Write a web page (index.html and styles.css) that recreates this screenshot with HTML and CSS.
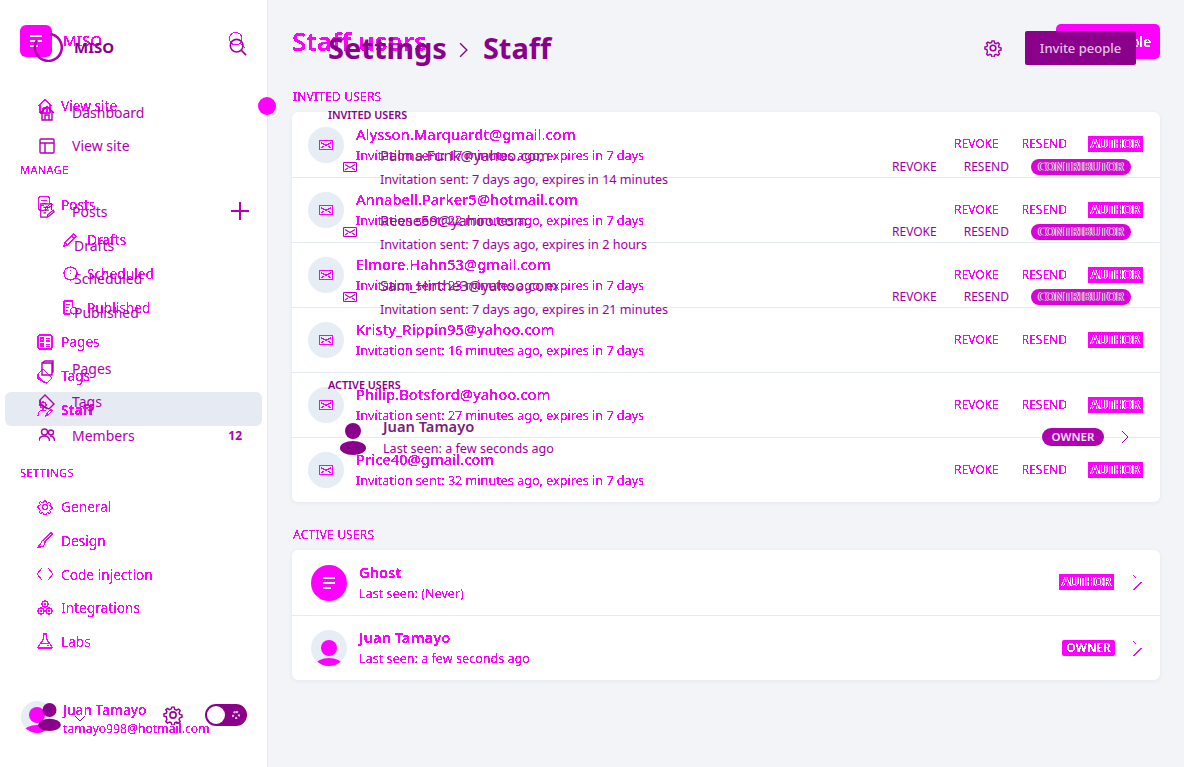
FILE: index.html
```html
<!DOCTYPE html>
<html lang="en">
<head>
<meta charset="utf-8">
<title>Staff</title>
<link rel="stylesheet" href="styles.css">
</head>
<body>
<svg class="defs" width="0" height="0" aria-hidden="true">
  <defs>
    <filter id="crisp" x="-5%" y="-5%" width="110%" height="110%" color-interpolation-filters="sRGB">
      <feComponentTransfer><feFuncA type="discrete" tableValues="0 0 1 1 1"/></feComponentTransfer>
    </filter>
    <symbol id="i-home" viewBox="0 0 16 16"><path d="M1 8 8 1.500 15 8M3 6.500V15h10V6.500M6 15v-5h4v5"/></symbol>
    <symbol id="i-posts" viewBox="0 0 16 18"><path d="M13 8V1H1v15h6M4 5h6M4 8h6M4 11h3M8 16l1-3 6-5 1 2-6 5z"/></symbol>
    <symbol id="i-pencil" viewBox="0 0 16 16"><path d="M1 15l1-4L11 2l3 3-9 9zM9 4l3 3M2 11l3 3"/></symbol>
    <symbol id="i-clock" viewBox="0 0 16 16"><circle cx="8" cy="8" r="7"/><path d="M8 7.500v1M8 4v1"/></symbol>
    <symbol id="i-pub" viewBox="0 0 16 16"><path d="M8 15H1V1h9v6M3.500 5h4M3.500 8h3M3.500 11h2"/><circle cx="11.500" cy="11.500" r="3.500"/></symbol>
    <symbol id="i-pages" viewBox="0 0 16 16"><rect x="1" y="1" width="14" height="14" rx="1"/><path d="M3.500 4h3v3h-3zM3.500 10h3v2h-3zM9 4.500h4M9 7h4M9 10.500h4M9 12.500h4"/></symbol>
    <symbol id="i-tag" viewBox="0 0 16 16"><path d="M1 6l5-5 9 9-5 5-9-4z"/><path d="M1 6v3l7 6"/></symbol>
    <symbol id="i-staff" viewBox="0 0 16 16"><circle cx="6" cy="4" r="3"/><path d="M1 15c0-4 2-6 5-6 1 0 2 .3 3 1M9 15l1-3 4-4 1 2-4 4z"/></symbol>
    <symbol id="i-gear" viewBox="0 0 16 16"><circle cx="8" cy="8" r="2.500"/><path d="M7 1h2l.5 2 1.500.7 2-1 1.400 1.500-1 1.800.6 1.500 2 .5v2l-2 .5-.6 1.500 1 1.800-1.400 1.500-2-1-1.500.7-.5 2H7l-.5-2-1.500-.7-2 1-1.400-1.500 1-1.800L2 9.500 0 9V7l2-.5.6-1.500-1-1.800L3 2.200l2 1 1.500-.7z" transform="translate(.8 .8) scale(.9)"/></symbol>
    <symbol id="i-brush" viewBox="0 0 16 16"><path d="M15 1 14 .5 6 8l2 2 7.500-8zM6 8c-1 .5-1.500 1-2 3l-3 4h2.500C6 15 8 13 8 10"/></symbol>
    <symbol id="i-code" viewBox="0 0 16 16"><path d="M5 2 0 8l5 6M11 2l5 6-5 6"/></symbol>
    <symbol id="i-int" viewBox="0 0 16 16"><circle cx="8" cy="4" r="3"/><circle cx="4" cy="11" r="3"/><circle cx="12" cy="11" r="3"/><path d="M8 3v2M3 11h2M11 11h2"/></symbol>
    <symbol id="i-labs" viewBox="0 0 16 16"><path d="M5.500 1h5M6.500 1v5L1 14v1h14v-1L9.500 6V1M3.500 10.500h9M10 12.500h2M11 11.500v2"/></symbol>
    <symbol id="i-mail" viewBox="0 0 14 10"><rect x=".5" y=".5" width="13" height="9" rx="1"/><path d="M2 2.500 7 5.500l5-3M2 8l3-2M12 8 9 6"/></symbol>
    <symbol id="i-search" viewBox="0 0 20 20"><circle cx="8.500" cy="8.500" r="7"/><path d="M13.500 13.500 19 19"/></symbol>
    <symbol id="i-chev" viewBox="0 0 8 14"><path d="M1 1l6 6-6 6"/></symbol>
    <symbol id="i-chev-a" viewBox="0 0 9 15"><path d="M.5 .5l2 2M.5 14.500l8-7"/></symbol>
    <symbol id="i-lines" viewBox="0 0 16 16"><path d="M2 3h12M2 8h12M2 13h8"/></symbol>
    <symbol id="i-person" viewBox="0 0 26 32"><circle cx="13" cy="8" r="8"/><ellipse cx="13" cy="25" rx="13" ry="7"/></symbol>
  </defs>
</svg>

<div class="stage">
  <div class="layer-a">
    <aside class="a-side">
      <div class="a-brand">
        <span class="a-logo"><svg class="lines"><use href="#i-lines"/></svg></span>
        <span class="a-brand-name t">MISO</span>
        <svg class="a-search ic"><use href="#i-search"/></svg>
      </div>
      <span class="a-dot"></span>
      <nav class="a-nav">
        <a class="a-item"><svg class="ic"><use href="#i-home"/></svg><span class="t">View site</span></a>
        <div class="a-label t">MANAGE</div>
        <a class="a-item a-posts"><svg class="ic"><use href="#i-posts"/></svg><span class="t">Posts</span></a>
        <a class="a-item a-sub"><svg class="ic"><use href="#i-pencil"/></svg><span class="t">Drafts</span></a>
        <a class="a-item a-sub"><svg class="ic"><use href="#i-clock"/></svg><span class="t">Scheduled</span></a>
        <a class="a-item a-sub"><svg class="ic"><use href="#i-pub"/></svg><span class="t">Published</span></a>
        <a class="a-item a-pages"><svg class="ic"><use href="#i-pages"/></svg><span class="t">Pages</span></a>
        <a class="a-item"><svg class="ic"><use href="#i-tag"/></svg><span class="t">Tags</span></a>
        <a class="a-item is-active"><svg class="ic"><use href="#i-staff"/></svg><span class="t">Staff</span></a>
        <div class="a-label a-label-gap t">SETTINGS</div>
        <a class="a-item"><svg class="ic"><use href="#i-gear"/></svg><span class="t">General</span></a>
        <a class="a-item"><svg class="ic"><use href="#i-brush"/></svg><span class="t">Design</span></a>
        <a class="a-item"><svg class="ic"><use href="#i-code"/></svg><span class="t">Code injection</span></a>
        <a class="a-item"><svg class="ic"><use href="#i-int"/></svg><span class="t">Integrations</span></a>
        <a class="a-item"><svg class="ic"><use href="#i-labs"/></svg><span class="t">Labs</span></a>
      </nav>
      <div class="a-foot">
        <span class="a-foot-av"><svg class="person"><use href="#i-person"/></svg></span>
        <div class="a-foot-text t"><div class="a-foot-name">Juan Tamayo</div><div>tamayo998@hotmail.com</div></div>
      </div>
    </aside>
    <main class="a-main">
      <header class="a-head">
        <h1 class="a-title t">Staff users</h1>
        <button class="a-btn"><span class="t">Invite people</span></button>
      </header>
      <div class="a-cap a-cap-first t">INVITED USERS</div>
      <section class="a-card">
        <div class="a-row"><span class="a-av"><svg class="mail ic"><use href="#i-mail"/></svg></span><div class="a-body t"><div class="a-mail">Alysson.Marquardt@gmail.com</div><div class="a-sub-t">Invitation sent: 17 minutes ago, expires in 7 days</div></div><span class="a-act t">REVOKE</span><span class="a-act a-act2 t">RESEND</span><span class="a-tag"><span class="t">AUTHOR</span></span></div>
        <div class="a-row"><span class="a-av"><svg class="mail ic"><use href="#i-mail"/></svg></span><div class="a-body t"><div class="a-mail">Annabell.Parker5@hotmail.com</div><div class="a-sub-t">Invitation sent: 22 minutes ago, expires in 7 days</div></div><span class="a-act t">REVOKE</span><span class="a-act a-act2 t">RESEND</span><span class="a-tag"><span class="t">AUTHOR</span></span></div>
        <div class="a-row"><span class="a-av"><svg class="mail ic"><use href="#i-mail"/></svg></span><div class="a-body t"><div class="a-mail">Elmore.Hahn53@gmail.com</div><div class="a-sub-t">Invitation sent: 23 minutes ago, expires in 7 days</div></div><span class="a-act t">REVOKE</span><span class="a-act a-act2 t">RESEND</span><span class="a-tag"><span class="t">AUTHOR</span></span></div>
        <div class="a-row"><span class="a-av"><svg class="mail ic"><use href="#i-mail"/></svg></span><div class="a-body t"><div class="a-mail">Kristy_Rippin95@yahoo.com</div><div class="a-sub-t">Invitation sent: 16 minutes ago, expires in 7 days</div></div><span class="a-act t">REVOKE</span><span class="a-act a-act2 t">RESEND</span><span class="a-tag"><span class="t">AUTHOR</span></span></div>
        <div class="a-row"><span class="a-av"><svg class="mail ic"><use href="#i-mail"/></svg></span><div class="a-body t"><div class="a-mail">Philip.Botsford@yahoo.com</div><div class="a-sub-t">Invitation sent: 27 minutes ago, expires in 7 days</div></div><span class="a-act t">REVOKE</span><span class="a-act a-act2 t">RESEND</span><span class="a-tag"><span class="t">AUTHOR</span></span></div>
        <div class="a-row"><span class="a-av"><svg class="mail ic"><use href="#i-mail"/></svg></span><div class="a-body t"><div class="a-mail">Price40@gmail.com</div><div class="a-sub-t">Invitation sent: 32 minutes ago, expires in 7 days</div></div><span class="a-act t">REVOKE</span><span class="a-act a-act2 t">RESEND</span><span class="a-tag"><span class="t">AUTHOR</span></span></div>
      </section>
      <div class="a-cap a-cap-second t">ACTIVE USERS</div>
      <section class="a-card">
        <div class="a-row a-user"><span class="a-av a-av-ghost"><svg class="lines"><use href="#i-lines"/></svg></span><div class="a-body t"><div class="a-mail">Ghost</div><div class="a-sub-t">Last seen: (Never)</div></div><span class="a-tag"><span class="t">AUTHOR</span></span><svg class="a-chev ic"><use href="#i-chev-a"/></svg></div>
        <div class="a-row a-user"><span class="a-av"><svg class="person"><use href="#i-person"/></svg></span><div class="a-body t"><div class="a-mail">Juan Tamayo</div><div class="a-sub-t">Last seen: a few seconds ago</div></div><span class="a-tag a-tag-owner"><span class="t">OWNER</span></span><svg class="a-chev ic"><use href="#i-chev-a"/></svg></div>
      </section>
    </main>
  </div>

  <div class="layer-b">
    <aside class="b-side">
      <div class="b-brand">
        <svg class="b-ring" viewBox="0 0 30 30"><path d="M17 2A13.500 13.500 0 1 1 4 8"/></svg>
        <span class="b-brand-name">MISO</span>
        <svg class="b-search bi"><use href="#i-search"/></svg>
      </div>
      <nav class="b-nav">
        <a class="b-item"><svg class="bi"><use href="#i-home"/></svg><span>Dashboard</span></a>
        <a class="b-item"><svg class="bi"><rect x="1" y="1" width="14" height="14" rx="1"/><path d="M1 5h14M6 5v10"/></svg><span>View site</span></a>
        <a class="b-item b-gap"><svg class="bi"><use href="#i-posts"/></svg><span>Posts</span><svg class="b-plus bi" viewBox="0 0 18 18"><path d="M9 0v18M0 9h18"/></svg></a>
        <a class="b-item b-sub"><span>Drafts</span></a>
        <a class="b-item b-sub"><span>Scheduled</span></a>
        <a class="b-item b-sub"><span>Published</span></a>
        <a class="b-item b-gap2"><svg class="bi"><path d="M3 3h10v12H3zM3 3l3-2h8v11l-1 1"/></svg><span>Pages</span></a>
        <a class="b-item"><svg class="bi"><use href="#i-tag"/></svg><span>Tags</span></a>
        <a class="b-item"><svg class="bi"><circle cx="5.500" cy="5" r="3"/><circle cx="12" cy="5.500" r="2.500"/><path d="M0 14c0-3 2-5 5.500-5s5 2 5 5M11 9c3 0 4.500 2 4.500 5"/></svg><span>Members</span><b class="b-count">12</b></a>
      </nav>
      <div class="b-foot">
        <svg class="person b-person"><use href="#i-person"/></svg>
        <svg class="b-caret" viewBox="0 0 10 6"><path d="M0 0l5 5 5-5"/></svg>
        <svg class="b-gear bi"><use href="#i-gear"/></svg>
        <span class="b-toggle"><span class="b-knob"></span><span class="b-sun"></span></span>
      </div>
    </aside>
    <main class="b-main">
      <header class="b-head">
        <h1 class="b-title">Settings<svg class="b-sep" viewBox="0 0 8 14"><path d="M1 1l6 6-6 6"/></svg>Staff</h1>
        <svg class="b-head-gear bi"><use href="#i-gear"/></svg>
        <button class="b-btn">Invite people</button>
      </header>
      <div class="b-cap">INVITED USERS</div>
      <div class="b-row"><svg class="b-mail bi"><use href="#i-mail"/></svg><div class="b-body"><div class="b-mailt">Palma.Funk@yahoo.com</div><div class="b-subt">Invitation sent: 7 days ago, expires in 14 minutes</div></div><span class="b-act">REVOKE</span><span class="b-act b-act2">RESEND</span><span class="b-tag">CONTRIBUTOR</span></div>
      <div class="b-row"><svg class="b-mail bi"><use href="#i-mail"/></svg><div class="b-body"><div class="b-mailt">Reese59@yahoo.com</div><div class="b-subt">Invitation sent: 7 days ago, expires in 2 hours</div></div><span class="b-act">REVOKE</span><span class="b-act b-act2">RESEND</span><span class="b-tag">CONTRIBUTOR</span></div>
      <div class="b-row"><svg class="b-mail bi"><use href="#i-mail"/></svg><div class="b-body"><div class="b-mailt">Sam_Hirthe3@yahoo.com</div><div class="b-subt">Invitation sent: 7 days ago, expires in 21 minutes</div></div><span class="b-act">REVOKE</span><span class="b-act b-act2">RESEND</span><span class="b-tag">CONTRIBUTOR</span></div>
      <div class="b-cap b-cap2">ACTIVE USERS</div>
      <div class="b-row b-owner"><svg class="person b-row-person"><use href="#i-person"/></svg><div class="b-body"><div class="b-mailt b-name">Juan Tamayo</div><div class="b-subt">Last seen: a few seconds ago</div></div><span class="b-pill">OWNER</span><svg class="b-chev" viewBox="0 0 8 14"><path d="M1 1l6 6-6 6"/></svg></div>
    </main>
  </div>
</div>
</body>
</html>
```
FILE: styles.css
```css
* { box-sizing: border-box; }
html, body { margin: 0; height: 100%; }
body { font-family: "Noto Sans", sans-serif; overflow: hidden; background: #f2f4f8; }
.defs { position: absolute; }
.stage { position: relative; width: 1184px; height: 767px; overflow: hidden; }

/* Crisp magenta layer */
.t, .ic { filter: url(#crisp); }
.ic { fill: none; stroke: #f0f; stroke-width: 1.1; }
.layer-a { display: flex; height: 100%; color: #f0f; }
.a-side { width: 268px; background: #fff; border-right: 1px solid #e8ebf2; display: flex; flex-direction: column; position: relative; }
.a-brand { display: flex; align-items: center; height: 32px; margin: 25px 0 0 20px; }
.a-logo { width: 32px; height: 32px; background: #f0f; border-radius: 6px; display: flex; align-items: center; justify-content: center; }
.lines { width: 16px; height: 16px; fill: none; stroke: #fff; stroke-width: 2; }
.a-brand-name { margin: -2px 0 0 11px; font-size: 15px; font-weight: 500; }
.a-search { width: 18px; height: 18px; margin: -2px 21px 0 auto; }
.a-dot { position: absolute; left: 258px; top: 97px; width: 18px; height: 18px; border-radius: 50%; background: #f0f; }
.a-nav { margin: 32px 5px 0; display: flex; flex-direction: column; }
.a-item { height: 33.7px; display: flex; align-items: center; padding-left: 32px; font-size: 13.7px; border-radius: 6px; flex: none; }
.a-item svg { width: 16px; height: 16px; margin-right: 8px; flex: none; }
.a-posts { margin-top: 1px; }
.a-sub { padding-left: 58px; height: 34px; }
.a-posts + .a-sub { margin-top: 1px; }
.a-pages { margin-top: 1px; }
.a-sub svg { width: 15px; height: 15px; margin-right: 9px; }
.is-active { background: #e6ebf3; font-weight: 700; }
.a-label { height: 33.7px; line-height: 33.7px; padding-left: 15px; font-size: 11px; letter-spacing: .4px; margin-top: 30px; flex: none; }
.a-foot { margin-top: auto; margin-bottom: 29px; padding-left: 21px; display: flex; align-items: center; }
.a-foot-av { width: 32px; height: 32px; background: #e6edf5; border-radius: 50%; overflow: hidden; display: flex; justify-content: center; flex: none; }
.person { fill: currentColor; }
.a-foot-av .person { width: 26px; height: 32px; margin-top: 6px; flex: none; }
.a-foot-text { margin: 4px 0 0 10px; font-size: 12.2px; line-height: 19px; }
.a-foot-name { font-weight: 500; font-size: 13.7px; }

.a-main { flex: 1; padding: 24px 24px 0 24px; }
.a-head { display: flex; justify-content: space-between; height: 35px; }
.a-title { margin: -2px 0 0; font-size: 26px; line-height: 38px; font-weight: 600; }
.a-btn { width: 104px; height: 35px; border: 0; border-radius: 5px; background: #f0f; color: #fff; font: 600 13.5px "Noto Sans", sans-serif; padding: 0; }
.a-cap { font-size: 12px; line-height: 16px; margin-left: 1px; letter-spacing: .2px; }
.a-cap-first { margin-top: 30px; margin-bottom: 7px; }
.a-cap-second { margin-top: 25px; margin-bottom: 7px; }
.a-card { background: #fff; border-radius: 6px; box-shadow: 0 1px 4px rgba(40,50,90,.07); }
.a-row { height: 65px; display: flex; align-items: center; padding: 0 17px 0 16px; border-top: 1px solid #e6ebf3; }
.a-row:first-child { border-top: 0; }
.a-av { width: 36px; height: 36px; border-radius: 50%; background: #e6edf5; display: flex; align-items: center; justify-content: center; overflow: hidden; flex: none; }
.mail { width: 14px; height: 10px; }
.a-body { margin-left: 12px; flex: 1; }
.a-mail { font-size: 14.7px; font-weight: 500; line-height: 21px; margin-top: -1px; }
.a-sub-t { font-size: 12.6px; line-height: 18px; margin-top: 2px; }
.a-act { font-size: 12px; margin-right: 23px; margin-top: -2px; }
.a-act2 { margin-right: 21px; }
.a-tag { width: 55px; height: 16px; background: #f0f; font-size: 12px; line-height: 16px; text-align: center; flex: none; margin-top: -1px; }
.a-tag .t { display: inline-block; color: #f0f; text-shadow: -1px 0 #fff, 1px 0 #fff; }
.a-user { padding-left: 19px; padding-right: 18px; }
.a-user .a-mail { font-weight: 600; }
.a-av-ghost { background: #f0f; }
.a-user .person { width: 26px; height: 32px; margin-top: 16px; color: #f0f; flex: none; }
.a-tag-owner { width: 53px; border-radius: 2px; font-weight: 600; margin-right: -1px; }
.a-tag-owner .t { color: #fff; text-shadow: none; }
.a-chev { width: 9px; height: 15px; margin-left: 19px; }

/* Purple overlay layer */
.layer-b { position: absolute; inset: 0; display: flex; color: #8b008b; }
.bi { fill: none; stroke: #b000b0; stroke-width: 1.4; }
.b-side { width: 268px; display: flex; flex-direction: column; }
.b-brand { display: flex; align-items: center; height: 30px; margin: 32px 0 0 33px; }
.b-ring { width: 30px; height: 30px; fill: none; stroke: #b000b0; stroke-width: 2.500; flex: none; }
.b-brand-name { margin-left: 11px; font-size: 15px; font-weight: 700; }
.b-search { width: 18px; height: 18px; margin-left: auto; margin-right: 21px; stroke-width: 1.8; stroke: #a000a0; }
.b-nav { display: flex; flex-direction: column; margin-top: 34px; padding-left: 39px; }
.b-item { height: 33.300px; display: flex; align-items: center; font-size: 14px; color: #b000b0; padding-right: 19px; flex: none; }
.b-item > .bi { width: 16px; height: 16px; margin-right: 17px; flex: none; }
.b-item > .b-plus { width: 18px; height: 18px; margin: 0 0 0 auto; stroke-width: 2; }
.b-count { margin-left: auto; font-size: 12px; margin-right: 7px; }
.b-gap { margin-top: 32px; }
.b-gap + .b-sub { margin-top: 1px; }
.b-gap2 { margin-top: 23px; }
.b-sub { padding-left: 35px; }
.b-foot { margin-top: auto; margin-bottom: 34px; display: flex; align-items: center; padding-left: 38px; height: 36px; }
.b-person { width: 23px; height: 28px; margin-top: 4px; color: #8b008b; flex: none; }
.b-caret { width: 10px; height: 6px; margin-left: 14px; margin-top: 8px; fill: none; stroke: #8b008b; flex: none; }
.b-gear { width: 20px; height: 20px; margin-left: 78px; stroke: #990099; stroke-width: 1.300; flex: none; }
.b-toggle { width: 42px; height: 22px; margin-left: 22px; border-radius: 11px; background: #8b008b; padding: 2px; display: flex; align-items: center; justify-content: space-between; }
.b-knob { width: 18px; height: 18px; border-radius: 50%; background: #fff; }
.b-sun { width: 8px; height: 8px; margin-right: 5px; border-radius: 50%; border: 2px dotted #f5c8f5; }

.b-main { flex: 1; padding: 31px 48px 0 60px; }
.b-head { display: flex; align-items: center; height: 34px; }
.b-title { margin: 0; font-size: 29px; font-weight: 700; color: #8b008b; display: flex; align-items: center; line-height: 34px; }
.b-sep { width: 9px; height: 16px; margin: 3px 15px 0 12px; fill: none; stroke: #8b008b; stroke-width: 1.200; }
.b-head-gear { width: 18px; height: 18px; margin-left: auto; margin-right: 23px; stroke: #a000a0; }
.b-btn { width: 111px; height: 34px; border: 0; border-radius: 2px; background: #8b008b; color: #e3c6e3; font: 500 13px "Noto Sans", sans-serif; padding: 0; }
.b-cap { font-size: 10.800px; font-weight: 600; margin-top: 42px; line-height: 16px; color: #8b008b; }
.b-row { height: 65px; display: flex; align-items: center; padding: 0 5px 0 15px; }
.b-cap + .b-row { margin-top: 11px; }
.b-mail { width: 14px; height: 10px; stroke: #c000c0; stroke-width: 1.100; flex: none; }
.b-body { margin-left: 23px; margin-top: 1px; flex: 1; }
.b-mailt { font-size: 14.700px; line-height: 21px; color: #7a207a; }
.b-subt { font-size: 12.600px; line-height: 18px; margin-top: 5px; color: #a000a0; }
.b-act { font-size: 12px; color: #a000a0; margin-right: 27px; }
.b-act2 { margin-right: 22px; }
.b-tag { width: 100px; height: 16px; border-radius: 8px; background: #dc00dc; color: #b040b0; font-size: 12px; line-height: 16px; text-align: center; letter-spacing: .2px; text-shadow: -1px 0 #efe6ef, 1px 0 #efe6ef; flex: none; }
.b-cap2 { margin-top: 48px; }
.b-owner { padding-left: 12px; }
.b-row-person { width: 26px; height: 32px; margin-top: 5px; flex: none; }
.b-name { font-weight: 600; }
.b-owner .b-body { margin-left: 17px; margin-top: 0; }
.b-owner .b-subt { margin-top: 3px; }
.b-pill { width: 62px; height: 18px; border-radius: 9px; background: #b000b0; color: #f4e4f4; font-size: 11.500px; font-weight: 600; text-align: center; line-height: 18px; flex: none; }
.b-chev { width: 8px; height: 14px; margin-left: 17px; margin-right: 2px; fill: none; stroke: #a000a0; flex: none; }
```
